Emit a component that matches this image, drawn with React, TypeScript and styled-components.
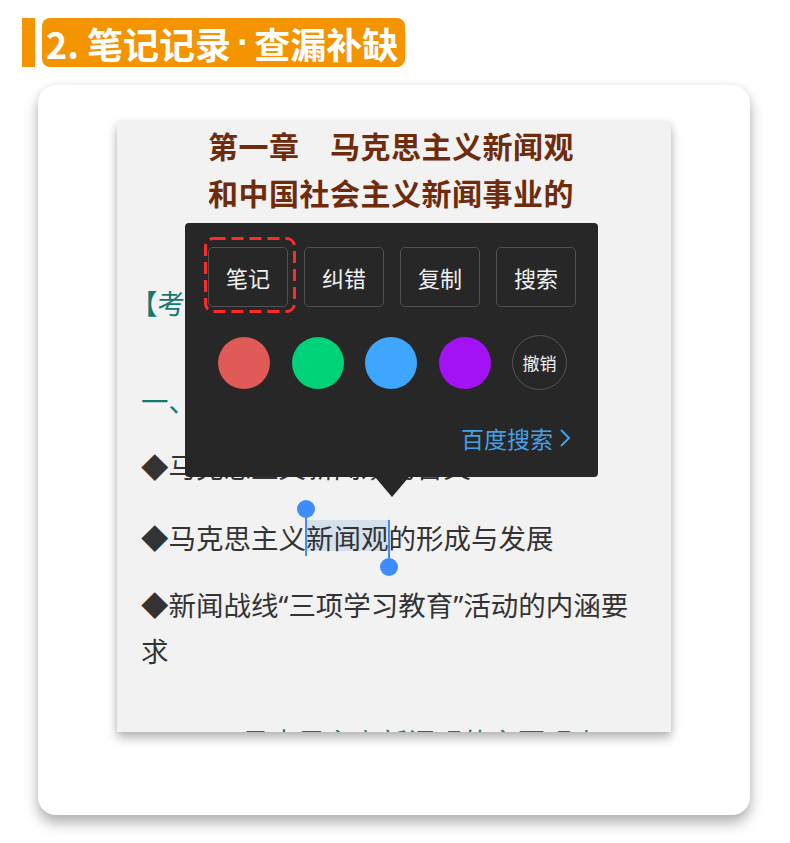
import styled, { createGlobalStyle } from 'styled-components'

const GlobalStyle = createGlobalStyle`
  html, body {
    margin: 0;
    padding: 0;
    background: #ffffff;
  }
  body {
    font-family: 'Noto Sans CJK SC', 'Noto Sans', sans-serif;
  }
`

const Page = styled.div`
  width: 790px;
  height: 843px;
  overflow: hidden;
  padding-top: 18px;
  box-sizing: border-box;
`

const Header = styled.div`
  display: flex;
  align-items: stretch;
  gap: 7px;
  height: 49px;
  padding-left: 22px;
`

const HeaderBar = styled.div`
  width: 13px;
  background: #f39400;
`

const HeaderPill = styled.div`
  width: 363px;
  box-sizing: border-box;
  padding-left: 4px;
  display: flex;
  align-items: center;
  background: #f39400;
  border-radius: 8px;
  color: #ffffff;
  font-size: 36px;
  font-weight: 700;
  white-space: nowrap;
`

const Dot = styled.span`
  font-family: 'Liberation Sans', sans-serif;
  margin: 0 5px 0 6px;
`

const Card = styled.div`
  width: 712px;
  margin: 18px 0 0 38px;
  padding: 37px 0 83px;
  background: #ffffff;
  border-radius: 18px;
  box-shadow: 0 8px 14px rgba(0, 0, 0, 0.3), 0 0 6px rgba(0, 0, 0, 0.06);
`

const Phone = styled.div`
  position: relative;
  width: 554px;
  height: 610px;
  margin: 0 auto;
  background: #f2f2f2;
  box-shadow: 0 6px 10px rgba(0, 0, 0, 0.28), 0 0 6px rgba(0, 0, 0, 0.08);
`

const Clip = styled.div`
  height: 100%;
  overflow: hidden;
  padding: 0 24px;
  box-sizing: border-box;
`

const ChapterTitle = styled.h1`
  margin: 0 6px 0 0;
  text-align: center;
  font-size: 30px;
  line-height: 47px;
  font-weight: 700;
  letter-spacing: 0.5px;
  color: #6e2c0c;
`

const Para = styled.p<{ $teal?: boolean; $center?: boolean; $gap: number; $indent?: number }>`
  margin: ${p => p.$gap}px 0 0;
  font-size: 27.5px;
  line-height: 44px;
  color: ${p => (p.$teal ? '#137a6f' : '#333333')};
  text-align: ${p => (p.$center ? 'center' : 'left')};
  text-indent: ${p => p.$indent ?? 0}px;
`

const Quote = styled.span`
  font-family: 'Noto Sans', sans-serif;
`

const Selected = styled.span`
  position: relative;
  background: linear-gradient(
    to bottom,
    transparent 3.5px,
    #d4e0eb 3.5px,
    #d4e0eb 34.5px,
    transparent 34.5px
  );
`

const Handle = styled.span<{ $end?: boolean }>`
  position: absolute;
  top: ${p => (p.$end ? '2.5px' : '-8.5px')};
  ${p => (p.$end ? 'right: -1.5px;' : 'left: -1.5px;')}
  width: 2.5px;
  height: 47px;
  background: #3f8cff;

  &::after {
    content: '';
    position: absolute;
    left: 50%;
    ${p => (p.$end ? 'bottom: -9px;' : 'top: -9px;')}
    width: 18px;
    height: 18px;
    margin-left: -9px;
    border-radius: 50%;
    background: #3f8cff;
  }
`

const Popup = styled.div`
  position: absolute;
  left: 68px;
  top: 101px;
  width: 413px;
  height: 254px;
  box-sizing: border-box;
  padding: 24px 22px 24px 23px;
  background: #272727;
  border-radius: 4px;
  display: flex;
  flex-direction: column;

  &::after {
    content: '';
    position: absolute;
    left: 50%;
    bottom: -20px;
    margin-left: -17px;
    border-left: 17px solid transparent;
    border-right: 17px solid transparent;
    border-top: 20px solid #272727;
  }
`

const ActionRow = styled.div`
  display: flex;
  gap: 16px;
`

const ActionButton = styled.div`
  position: relative;
  width: 80px;
  height: 60px;
  box-sizing: border-box;
  border: 1.5px solid #525252;
  border-radius: 5px;
  display: flex;
  align-items: center;
  justify-content: center;
  color: #f2f2f2;
  font-size: 22px;
`

const Marker = styled.svg`
  position: absolute;
  left: -5px;
  top: -11px;
  overflow: visible;
`

const ColorRow = styled.div`
  display: flex;
  align-items: center;
  gap: 21.5px;
  margin-top: 28px;
  padding-left: 10px;
`

const Swatch = styled.div<{ $color: string }>`
  width: 52px;
  height: 52px;
  border-radius: 50%;
  background: ${p => p.$color};
`

const UndoButton = styled.div`
  width: 55px;
  height: 55px;
  box-sizing: border-box;
  border-radius: 50%;
  border: 1.5px solid #555555;
  display: flex;
  align-items: center;
  justify-content: center;
  color: #f2f2f2;
  font-size: 17px;
`

const SearchLink = styled.div`
  margin-top: auto;
  align-self: flex-end;
  display: flex;
  align-items: center;
  gap: 6px;
  margin-right: 5px;
  color: #45a0e6;
  font-size: 23px;
  line-height: 30px;
`

const swatches = ['#e05a57', '#00d27a', '#3fa6ff', '#a212f5']

export default function App() {
  return (
    <>
      <GlobalStyle />
      <Page>
        <Header>
          <HeaderBar />
          <HeaderPill>
            2. 笔记记录<Dot>·</Dot>查漏补缺
          </HeaderPill>
        </Header>

        <Card>
          <Phone>
            <Clip>
              <ChapterTitle>
                第一章　马克思主义新闻观
                <br />
                和中国社会主义新闻事业的
              </ChapterTitle>
              <Para $teal $gap={64} $indent={-11}>【考点提示】</Para>
              <Para $teal $gap={54}>一、马克思主义新闻观</Para>
              <Para $gap={22}>◆马克思主义新闻观的含义</Para>
              <Para $gap={27}>
                ◆马克思主义
                <Selected>
                  <Handle />
                  新闻观
                  <Handle $end />
                </Selected>
                的形成与发展
              </Para>
              <Para $gap={23}>
                ◆新闻战线<Quote>“</Quote>三项学习教育<Quote>”</Quote>活动的内涵要求
              </Para>
              <Para $teal $center $gap={47}>二、马克思主义新闻观的主要观点</Para>
            </Clip>

            <Popup>
              <ActionRow>
                <ActionButton>
                  笔记
                  <Marker width="92" height="76">
                    <rect
                      x="1.5"
                      y="1.5"
                      width="89"
                      height="73"
                      rx="8"
                      fill="none"
                      stroke="#ff2b2b"
                      strokeWidth="3"
                      strokeDasharray="12 6"
                    />
                  </Marker>
                </ActionButton>
                <ActionButton>纠错</ActionButton>
                <ActionButton>复制</ActionButton>
                <ActionButton>搜索</ActionButton>
              </ActionRow>

              <ColorRow>
                {swatches.map(c => (
                  <Swatch key={c} $color={c} />
                ))}
                <UndoButton>撤销</UndoButton>
              </ColorRow>

              <SearchLink>
                百度搜索
                <svg width="12" height="20" viewBox="0 0 12 20">
                  <polyline
                    points="2,2 10,10 2,18"
                    fill="none"
                    stroke="#45a0e6"
                    strokeWidth="2"
                  />
                </svg>
              </SearchLink>
            </Popup>
          </Phone>
        </Card>
      </Page>
    </>
  )
}
